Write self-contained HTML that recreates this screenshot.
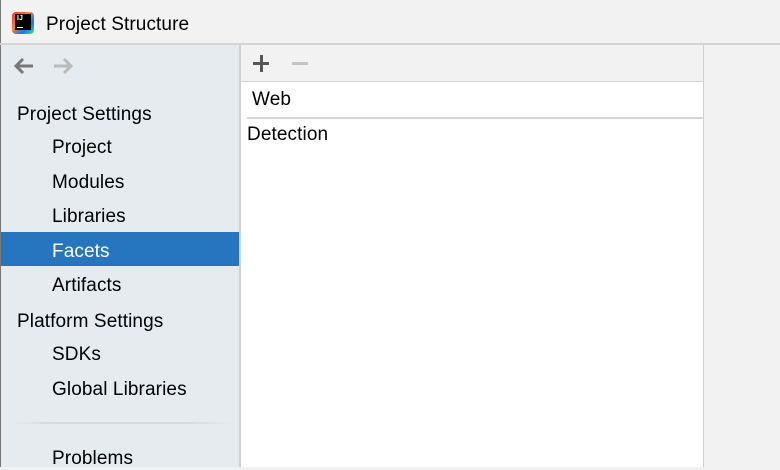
<!DOCTYPE html>
<html><head><meta charset="utf-8"><style>
*{margin:0;padding:0;box-sizing:border-box}
body{width:780px;height:467px;overflow:hidden;background:#f2f2f2;font-family:"Liberation Sans","Noto Sans CJK SC",sans-serif;color:#000;position:relative}
.abs{position:absolute}
.title{left:0;top:0;width:780px;height:43px;background:#f2f2f2;border-left:1px solid #777;}
.tb{left:0;top:43px;width:780px;height:2px;background:#d4d4d4}
.side{left:0;top:45px;width:239px;height:422px;background:#e6ebf0;border-left:1px solid #777}
.sb{left:239px;top:45px;width:2px;height:422px;background:#d0d0d0}
.t{font-size:19px;line-height:23px;white-space:nowrap;letter-spacing:0.1px}
.sel{left:1px;top:232px;width:238px;height:34px;background:#2675bf}
.white{left:241px;top:82px;width:462px;height:385px;background:#fff}
</style></head><body>
<div class="abs title"></div>
<div class="abs" style="left:12px;top:12px;width:22px;height:22px;border-radius:4px;background:linear-gradient(135deg,#fe2857 0%,#fc801d 40%,#087cfa 70%,#3bea62 100%)"></div>
<div class="abs" style="left:15px;top:14px;width:16px;height:16px;background:#000;color:#fff;font:bold 7px 'Liberation Sans',sans-serif;padding:1px 2px">IJ<div style="width:6px;height:1px;background:#fff;margin-top:5px"></div></div>
<div class="abs t" style="left:46px;top:13px">Project Structure</div>
<div class="abs tb"></div>
<div class="abs side"></div>
<div class="abs sb"></div>
<div class="abs" style="left:241px;top:45px;width:462px;height:36px;background:#f2f2f2"></div>
<div class="abs" style="left:241px;top:81px;width:462px;height:1px;background:#d0d0d0"></div>
<div class="abs white"></div>
<div class="abs" style="left:703px;top:45px;width:1px;height:422px;background:#d0d0d0"></div>
<div class="abs" style="left:247px;top:117px;width:456px;height:2px;background:#d6d6d6"></div>
<div class="abs t" style="left:252px;top:88px">Web</div>
<div class="abs t" style="left:247px;top:123px">Detection</div>
<div class="abs" style="left:253px;top:62px;width:16px;height:3px;background:#555"></div>
<div class="abs" style="left:259.5px;top:55px;width:3px;height:17px;background:#555"></div>
<div class="abs" style="left:292px;top:62px;width:16px;height:3px;background:#c4c4c4"></div>
<svg class="abs" style="left:12px;top:56px" width="24" height="20" viewBox="0 0 24 20"><path d="M21 10H4M11 3L4 10l7 7" stroke="#777" stroke-width="3" fill="none"/></svg>
<svg class="abs" style="left:52px;top:56px" width="24" height="20" viewBox="0 0 24 20"><path d="M2 10h17M12 3l7 7-7 7" stroke="#bbb" stroke-width="3" fill="none"/></svg>
<div class="abs sel"></div>
<div class="abs t" style="left:17px;top:103px">Project Settings</div>
<div class="abs t" style="left:52px;top:136px">Project</div>
<div class="abs t" style="left:52px;top:171px">Modules</div>
<div class="abs t" style="left:52px;top:205px">Libraries</div>
<div class="abs t" style="left:52px;top:240px;color:#fff">Facets</div>
<div class="abs t" style="left:52px;top:274px">Artifacts</div>
<div class="abs t" style="left:17px;top:310px">Platform Settings</div>
<div class="abs t" style="left:52px;top:343px">SDKs</div>
<div class="abs t" style="left:52px;top:378px">Global Libraries</div>
<div class="abs" style="left:12px;top:422px;width:220px;height:2px;background:linear-gradient(90deg,#e6ebf0,#d6d9dc 20%,#d6d9dc 80%,#e6ebf0)"></div>
<div class="abs t" style="left:52px;top:447px">Problems</div>
</body></html>
